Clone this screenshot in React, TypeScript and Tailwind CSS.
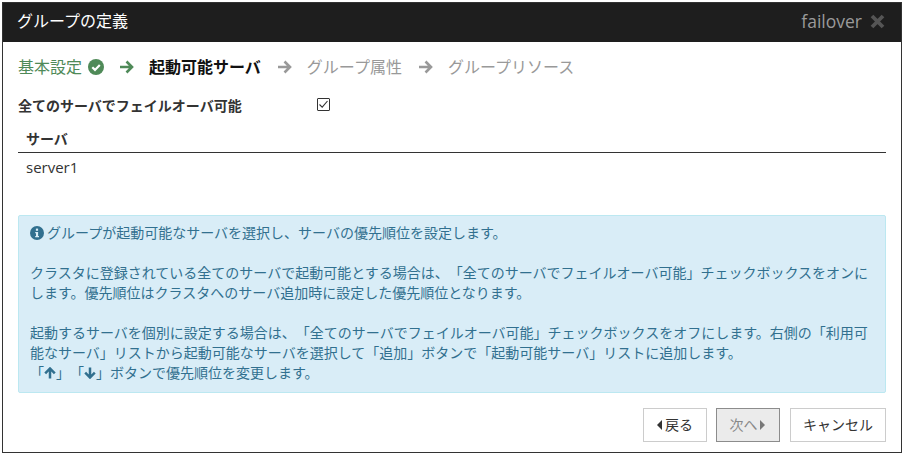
import React from "react";

const CheckCircle = () => (
  <svg width="16" height="16" viewBox="0 0 16 16" className="shrink-0">
    <circle cx="8" cy="8" r="8" fill="#4f8a58" />
    <path d="M4.3 8.2 L7 10.9 L11.8 6" fill="none" stroke="#fff" strokeWidth="2.2" />
  </svg>
);

const Arrow = ({ color }: { color: string }) => (
  <svg width="15" height="14" viewBox="0 0 15 14" className="shrink-0">
    <path d="M1 7 H12.5 M7.5 1.5 L13 7 L7.5 12.5" fill="none" stroke={color} strokeWidth="2.6" />
  </svg>
);

const SmallArrow = ({ up }: { up?: boolean }) => (
  <svg width="12" height="12" viewBox="0 0 12 12" className="inline-block align-[-1px]">
    <g transform={up ? undefined : "rotate(180 6 6)"}>
      <path d="M6 11.5 V2 M1.2 6.4 L6 1.5 L10.8 6.4" fill="none" stroke="#31708f" strokeWidth="2.5" />
    </g>
  </svg>
);

const InfoIcon = () => (
  <svg width="14" height="14" viewBox="0 0 14 14" className="inline-block align-[-2px] mr-[3px]">
    <circle cx="7" cy="7" r="7" fill="#31708f" />
    <rect x="5.9" y="2.6" width="2.2" height="2.2" fill="#d9edf7" />
    <path d="M5.2 6 H8.1 V10 H9 V11.2 H5.2 V10 H6 V7.2 H5.2 Z" fill="#d9edf7" />
  </svg>
);

export default function App() {
  return (
    <div className="w-[904px] h-[455px] bg-white p-[2px] font-['Open_Sans','Noto_Sans_CJK_JP',sans-serif] text-[14px] text-[#333] [text-spacing-trim:space-all]">
      <div className="h-[451px] w-[900px] border border-[#333] flex flex-col">
        <header className="h-[39px] shrink-0 bg-[#1e1e1e] flex items-center justify-between pl-[14px] pr-[16px] pb-[3px]">
          <h1 className="text-[16px] text-white font-normal">グループの定義</h1>
          <div className="flex items-center gap-[8px] text-[#9a9a9a] text-[17.5px]">
            <span>failover</span>
            <svg width="15" height="15" viewBox="0 0 15 15">
              <path d="M2 2 L13 13 M13 2 L2 13" stroke="#555" strokeWidth="3.8" fill="none" />
            </svg>
          </div>
        </header>

        <div className="flex-1 flex flex-col px-[15px]">
          <div className="flex items-center h-[20px] mt-[15px] text-[16px] text-[#999]">
            <span className="text-[#4f8a58]">基本設定</span>
            <span className="ml-[6px]"><CheckCircle /></span>
            <span className="ml-[15px]"><Arrow color="#4f8a58" /></span>
            <span className="ml-[15px] font-bold text-[#111]">起動可能サーバ</span>
            <span className="ml-[16px]"><Arrow color="#999" /></span>
            <span className="ml-[15px]">グループ属性</span>
            <span className="ml-[16px]"><Arrow color="#999" /></span>
            <span className="ml-[15px]">グループリソース</span>
          </div>

          <div className="flex items-center h-[20px] mt-[18px]">
            <span className="w-[299px] font-bold text-[14px] text-[#333]">全てのサーバでフェイルオーバ可能</span>
            <span className="w-[13px] h-[13px] border border-[#333] rounded-[1px] flex items-center justify-center mb-[1px]">
              <svg width="11" height="11" viewBox="0 0 11 11">
                <path d="M1.5 5.5 L4.2 8.2 L9.5 2" fill="none" stroke="#333" strokeWidth="1.1" />
              </svg>
            </span>
          </div>

          <div className="h-[28px] mt-[10px] border-b border-[#333] pl-[8px] flex items-center font-bold text-[#333] text-[14px] w-[868px]">
            サーバ
          </div>
          <div className="h-[31px] pl-[8px] flex items-center text-[#333] text-[15px] pb-[3px]">server1</div>

          <div className="mt-[31px] w-[868px] h-[178px] bg-[#d9edf7] border border-[#bce8f1] rounded-[2px] pl-[11px] pt-[7px] text-[#31708f] text-[14px] leading-[20px]">
            <p className="whitespace-nowrap"><InfoIcon />グループが起動可能なサーバを選択し、サーバの優先順位を設定します。</p>
            <p className="mt-[20px] whitespace-nowrap">
              クラスタに登録されている全てのサーバで起動可能とする場合は、「全てのサーバでフェイルオーバ可能」チェックボックスをオンに<br />
              します。優先順位はクラスタへのサーバ追加時に設定した優先順位となります。
            </p>
            <p className="mt-[20px] whitespace-nowrap">
              起動するサーバを個別に設定する場合は、「全てのサーバでフェイルオーバ可能」チェックボックスをオフにします。右側の「利用可<br />
              能なサーバ」リストから起動可能なサーバを選択して「追加」ボタンで「起動可能サーバ」リストに追加します。<br />
              「<SmallArrow up />」「<SmallArrow />」ボタンで優先順位を変更します。
            </p>
          </div>

          <div className="flex justify-end mt-[15px] w-[868px] text-[14px]">
            <button className="h-[34px] w-[64px] border border-[#ccc] bg-white text-[#333] flex items-center justify-center gap-[2px] pb-[2px]">
              <svg width="6" height="10" viewBox="0 0 6 10" className="mt-[2px]"><path d="M5 0 L0 5 L5 10 Z" fill="#333" /></svg>
              戻る
            </button>
            <button className="ml-[9px] h-[34px] w-[64px] border border-[#8c8c8c] bg-[#ebebeb] text-[#888] flex items-center justify-center gap-[1px] pb-[2px] pr-[2px]">
              次へ
              <svg width="6" height="10" viewBox="0 0 6 10" className="mt-[2px]"><path d="M1 0 L6 5 L1 10 Z" fill="#777" /></svg>
            </button>
            <button className="ml-[10px] h-[34px] w-[96px] border border-[#ccc] bg-white text-[#333] flex items-center justify-center pb-[2px]">
              キャンセル
            </button>
          </div>
        </div>
      </div>
    </div>
  );
}
